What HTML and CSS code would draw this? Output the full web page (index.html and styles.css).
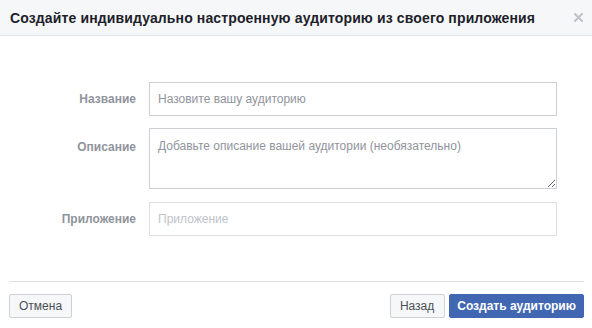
FILE: index.html
```html
<!DOCTYPE html>
<html lang="ru">
<head>
<meta charset="utf-8">
<link rel="stylesheet" href="styles.css">
</head>
<body>
<div class="dialog">
  <div class="header">
    <div class="title">Создайте индивидуально настроенную аудиторию из своего приложения</div>
    <div class="close" aria-label="Закрыть">
      <svg width="9" height="9" viewBox="0 0 9 9"><path d="M1 1L8 8M8 1L1 8" stroke="#bec2c9" stroke-width="2" stroke-linecap="square"/></svg>
    </div>
  </div>
  <div class="body">
    <div class="form">
      <label class="label">Название</label>
      <input class="field" type="text" placeholder="Назовите вашу аудиторию">
      <label class="label label-top">Описание</label>
      <textarea class="field area" placeholder="Добавьте описание вашей аудитории (необязательно)"></textarea>
      <label class="label">Приложение</label>
      <input class="field disabled" type="text" placeholder="Приложение">
    </div>
  </div>
  <div class="footer">
    <button class="btn cancel">Отмена</button>
    <div class="right">
      <button class="btn back">Назад</button>
      <button class="btn primary">Создать аудиторию</button>
    </div>
  </div>
</div>
</body>
</html>
```
FILE: styles.css
```css
* { box-sizing: border-box; }
html, body { margin: 0; padding: 0; background: #fff; }
body { font-family: "Liberation Sans", Arial, sans-serif; color: #1d2129; width: 592px; height: 328px; overflow: hidden; }
.dialog { width: 592px; height: 328px; display: flex; flex-direction: column; }
.header {
  height: 36px; background: #f6f7f9; border-bottom: 1px solid #e5e5e5;
  display: flex; align-items: center; justify-content: space-between;
  padding: 0 9px 0 10px;
}
.title { font-size: 14px; font-weight: bold; color: #1d2129; line-height: 18px; padding-top: 1px; letter-spacing: 0.13px; }
.close { width: 9px; height: 9px; display: flex; }
.close svg { display: block; }
.body { padding: 46px 35px 0 9px; height: 245px; }
.form {
  display: grid; grid-template-columns: 127px 408px; column-gap: 13px; row-gap: 12px;
  align-items: center;
}
.label { font-size: 12px; font-weight: bold; color: #90949c; text-align: right; }
.label-top { align-self: start; padding-top: 12px; }
.field {
  width: 408px; height: 34px; border: 1px solid #ccd0d5; border-radius: 0;
  font-family: "Liberation Sans", Arial, sans-serif; font-size: 12px; color: #1d2129;
  padding: 0 8px; margin: 0; outline: none; background: #fff;
}
.field::placeholder { color: #90949c; opacity: 1; }
.area { height: 61px; padding: 9px 8px; resize: both; display: block; line-height: 16px; }
.disabled { border-color: #dddfe2; margin-top: 1px; }
.disabled::placeholder { color: #bec3c9; }
.footer {
  margin: 0 8px 0 9px; border-top: 1px solid #dddfe2; padding-top: 12px;
  display: flex; justify-content: space-between; align-items: flex-start;
}
.right { display: flex; gap: 4px; }
.btn {
  height: 24px; padding: 0 10px; border: 1px solid #ced0d4; border-radius: 2px;
  background: #f6f7f9; color: #4b4f56; font-family: "Liberation Sans", Arial, sans-serif;
  font-size: 12px; font-weight: normal; line-height: 22px; margin: 0; cursor: pointer;
}
.cancel { padding: 0 9px 0 9px; }
.back { padding: 0 10px 0 9px; }
.primary { background: #4267b2; border-color: #4267b2; color: #fff; font-weight: bold; padding: 0 7px; }
```
